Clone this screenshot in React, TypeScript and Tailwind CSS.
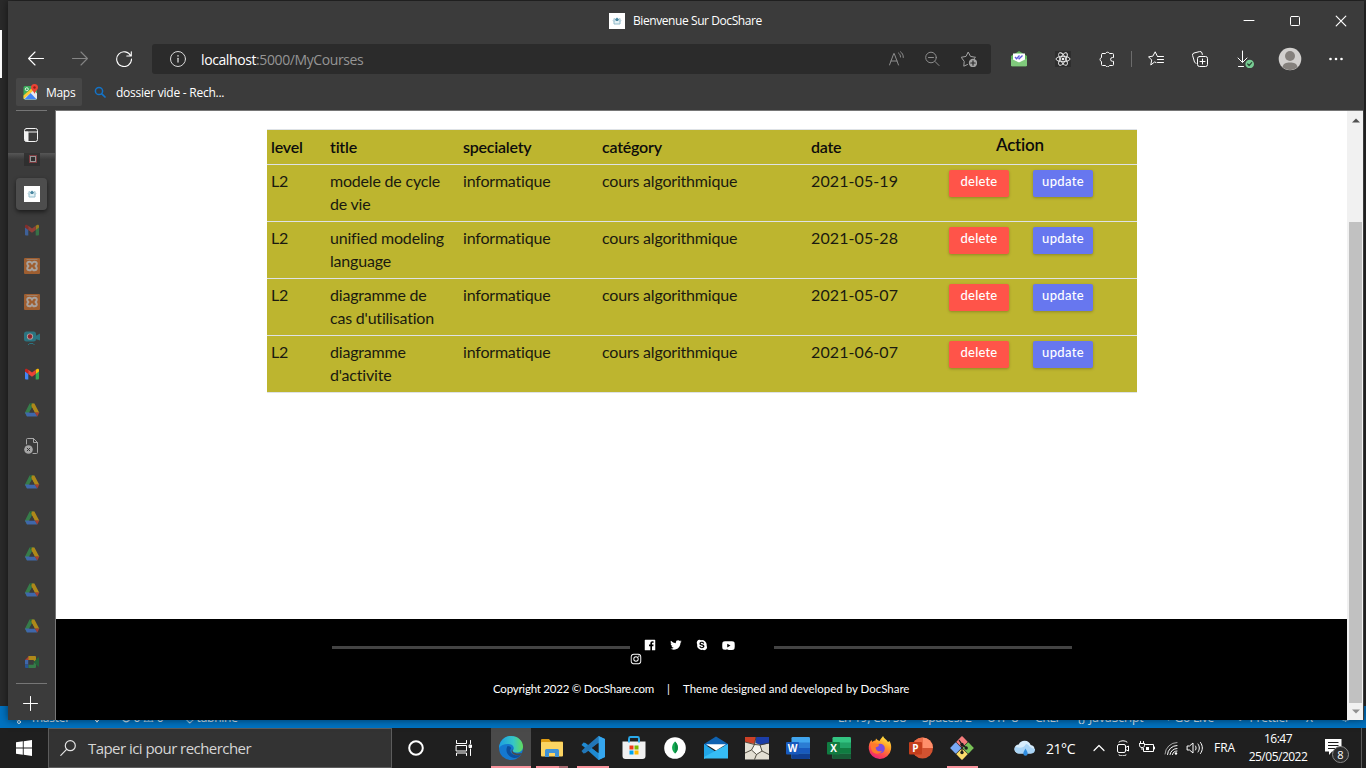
import React from "react";
import type { ReactNode } from "react";
import {
  BiLogoFacebookSquare,
  BiLogoTwitter,
  BiLogoSkype,
  BiLogoYoutube,
  BiLogoInstagram,
} from "react-icons/bi";

type IconProps = { className?: string; size?: number; box?: number; children: ReactNode };

function Line({ className = "", size = 16, box = 16, children }: IconProps) {
  return (
    <svg
      className={`block shrink-0 ${className}`}
      width={size}
      height={size}
      viewBox={`0 0 ${box} ${box}`}
      fill="none"
      stroke="currentColor"
      strokeLinecap="round"
      strokeLinejoin="round"
    >
      {children}
    </svg>
  );
}

function Art({ className = "", size = 24, box = 24, children }: IconProps) {
  return (
    <svg className={`block shrink-0 ${className}`} width={size} height={size} viewBox={`0 0 ${box} ${box}`}>
      {children}
    </svg>
  );
}

/* ---------- tab icons ---------- */

function DocShareIcon() {
  return (
    <Art size={16} box={16}>
      <rect width="16" height="16" fill="#fff" />
      <path d="M5.500 5.500H5v5.500h6V5.500h-.5" fill="#e4f1f5" stroke="#93bccb" strokeWidth="1" />
      <path d="M4 7.500l1 1M12 7.500l-1 1" stroke="#93bccb" strokeWidth="1" />
      <path d="M6 6.500L8 4.500l2 2-1 1.500H7z" fill="#4a87a1" />
    </Art>
  );
}

function Gmail({ dim = false }: { dim?: boolean }) {
  return (
    <Art size={16} box={16} className={dim ? "opacity-50" : ""}>
      <path d="M1 5v7.500a1 1 0 0 0 1 1h2.300V7.500z" fill="#4285f4" />
      <path d="M15 5v7.500a1 1 0 0 1-1 1h-2.300V7.500z" fill="#34a853" />
      <path d="M11.700 3.800L13 2.900c.9-.6 2 0 2 1.100v1.500l-3.300 2.400z" fill="#fbbc04" />
      <path d="M4.300 3.800L3 2.900C2.100 2.300 1 2.900 1 4v1.500l3.300 2.400z" fill="#c5221f" />
      <path d="M4.300 3.800L8 6.600l3.700-2.800v4.100L8 10.700 4.300 7.900z" fill="#ea4335" />
    </Art>
  );
}

function Xampp() {
  return (
    <Art size={16} box={16} className="opacity-60">
      <rect width="16" height="16" rx="1" fill="#e0762a" />
      <path d="M2.500 1.500h11" stroke="#efe6de" strokeWidth=".8" opacity=".6" />
      <path
        d="M8 5.800C7.600 4.300 6.800 3.700 5.500 3.700 4 3.700 3.200 4.600 3.200 5.700c0 .9.500 1.500 1.300 2.300-.8.800-1.300 1.400-1.300 2.300 0 1.100.8 2 2.300 2 1.300 0 2.100-.6 2.500-2.100.4 1.500 1.200 2.100 2.500 2.100 1.500 0 2.300-.9 2.300-2 0-.9-.5-1.500-1.300-2.300.8-.8 1.300-1.400 1.300-2.300 0-1.100-.8-2-2.300-2-1.300 0-2.100.6-2.500 2.100z"
        fill="none"
        stroke="#efe6de"
        strokeWidth="1.900"
        strokeLinejoin="round"
      />
    </Art>
  );
}

function Camera() {
  return (
    <Art size={16} box={16}>
      <rect x="0" y="1.500" width="12" height="10" rx="2.500" fill="#2b7480" />
      <path d="M11.500 6L16 3.500v7l-4.500-1.500z" fill="#2b7480" />
      <path d="M4 15l1.500-1.500h3.500l1.500 1.500" fill="none" stroke="#2b7480" />
      <circle cx="6" cy="6.500" r="3.100" fill="#b9a3a3" />
      <circle cx="6" cy="6.500" r="2.200" fill="#8f2328" />
    </Art>
  );
}

function Drive() {
  return (
    <Art size={16} box={16} className="opacity-60">
      <path d="M5.600 1.500h4.800L5 10.800 3 14.500 .9 10.800z" fill="#34a853" />
      <path d="M5.600 1.500h2.600l1.400 2.600L8 6z" fill="#188038" />
      <path d="M7.800 1.500h2.600l4.900 9.200h-4.500L7.300 4z" fill="#fbbc04" />
      <path d="M.9 10.600h10l2.500 4H3z" fill="#4285f4" />
      <path d="M10.700 10.600h4.600l-1.900 4z" fill="#ea4335" />
      <path d="M8 5.800l2.600 4.800H5.400z" fill="#3b3b3b" />
    </Art>
  );
}

function Meet() {
  return (
    <Art size={16} box={16} className="opacity-60">
      <path d="M1 6l4-4v4z" fill="#ea4335" />
      <path d="M1 6h3.500v4.500H1z" fill="#4285f4" />
      <path d="M1 10.500h3.500v3.500H2a1 1 0 0 1-1-1z" fill="#1967d2" />
      <path d="M4.500 2H11a1 1 0 0 1 1 1v4H9.500V6h-5z" fill="#fbbc04" />
      <path d="M4.500 10.500h5V8l2.500 1v4a1 1 0 0 1-1 1H4.500z" fill="#34a853" />
      <path d="M9.500 8L14 3.500c.5-.4 1-.2 1 .4v8.200c0 .6-.5.800-1 .4z" fill="#188038" />
      <path d="M4.500 6h5v4.500h-5z" fill="#3b3b3b" />
    </Art>
  );
}

function FileX() {
  return (
    <Line className="text-[#a6a6a6]">
      <path d="M2.500 6V1.500a1 1 0 0 1 1-1h6l4 4v10a1 1 0 0 1-1 1H9M9.500.5v4h4" />
      <circle cx="4.500" cy="11.500" r="4.300" fill="#a6a6a6" stroke="none" />
      <path d="M3.200 10.200l2.600 2.600M5.800 10.200l-2.600 2.600" stroke="#333" />
    </Line>
  );
}

/* ---------- browser window ---------- */

function TitleBar() {
  return (
    <div className="flex h-[39px] shrink-0 items-center">
      <div className="ml-[601px]">
        <DocShareIcon />
      </div>
      <span className="ml-2 w-[600px] text-[12px] tracking-[-0.42px] text-white">Bienvenue Sur DocShare</span>
      <Line size={12} box={12} className="ml-[10px] text-white">
        <path d="M1 5.500h10" />
      </Line>
      <Line size={12} box={12} className="ml-[34px] text-white">
        <rect x="1.500" y="1.500" width="9" height="9" rx="1" />
      </Line>
      <Line size={12} box={12} className="ml-[34px] text-white">
        <path d="M1.200 1.200l9.600 9.600M10.800 1.200l-9.600 9.600" strokeWidth="1.200" />
      </Line>
    </div>
  );
}

function AddressBar() {
  return (
    <div className="ml-5 flex h-[30px] w-[839px] items-center rounded-[3px] bg-[#2b2b2b] pr-[14px] pl-[18px]">
      <Line className="text-[#d8d8d8]">
        <circle cx="8" cy="8" r="7.500" />
        <path d="M8 7.300V11" strokeWidth="1.300" />
        <path d="M8 4.800v.1" strokeWidth="1.500" />
      </Line>
      <span className="ml-[15px] flex-1 text-[14px] tracking-[-0.4px] text-[#959595]">
        <span className="text-white">localhost</span>:5000/MyCourses
      </span>
      <Line className="text-[#8e8e8e]">
        <path d="M.5 14L4.800 2.500h.4L9.500 14M2 10h6M9.500 2c1.300 1 2 2.200 2 4M11.500.800c1.800 1.300 2.800 3 2.800 5.700" />
      </Line>
      <Line className="ml-5 text-[#8e8e8e]">
        <circle cx="6" cy="6.500" r="5.300" />
        <path d="M3.500 6.500h5M10 10.500l4 4" />
      </Line>
      <Line className="ml-5 text-[#a3a3a3]">
        <path d="M6.500 13.500L2.800 15.200l.4-4.900L.2 6.300l4.800-.9L7.200 1l2.300 4.400 5 .9-1.500 1.500" />
        <circle cx="12" cy="12" r="4.200" fill="#a3a3a3" stroke="none" />
        <path d="M12 9.800v4.400M9.800 12h4.400" stroke="#2b2b2b" strokeWidth="1.200" />
      </Line>
    </div>
  );
}

function Toolbar() {
  return (
    <div className="flex h-[38px] shrink-0 items-center">
      <Line className="ml-5 text-white">
        <path d="M15.500 7.500H.800M7 1L.6 7.500 7 14" strokeWidth="1.100" />
      </Line>
      <Line className="ml-7 text-[#858585]">
        <path d="M.5 7.500h14.700M9 1l6.400 6.500L9 14" strokeWidth="1.100" />
      </Line>
      <Line className="ml-7 text-white">
        <path d="M14.800 5A7.400 7.400 0 1 0 15.500 8M15.300.800V5h-4.500" strokeWidth="1.100" />
      </Line>
      <AddressBar />
      <Art size={16} box={16} className="ml-5">
        <path d="M0 5l8-5 8 5v9.200a1 1 0 0 1-1 1H1a1 1 0 0 1-1-1z" fill="#5fb55c" />
        <path d="M2 2.500h12v7L8 12 2 9.500z" fill="#fff" />
        <path d="M0 7.500l8 4 8-4v6.700a1 1 0 0 1-1 1H1a1 1 0 0 1-1-1z" fill="#80ca7c" />
        <path d="M4 6l1.600 1.800L8.500 4.500M7.500 7.300l.6.500L11.500 4.500" fill="none" stroke="#5c58d8" strokeWidth="1.300" />
      </Art>
      <Art size={16} box={16} className="ml-7">
        <rect width="16" height="16" fill="#2e2e2e" />
        <g fill="none" stroke="#f2f2f2" strokeWidth=".9">
          <ellipse cx="8" cy="8" rx="7" ry="2.700" />
          <ellipse cx="8" cy="8" rx="7" ry="2.700" transform="rotate(60 8 8)" />
          <ellipse cx="8" cy="8" rx="7" ry="2.700" transform="rotate(120 8 8)" />
        </g>
        <circle cx="8" cy="8" r="1.300" fill="#f2f2f2" />
      </Art>
      <Line className="ml-7 text-white">
        <path d="M3.500 2.500h3a2.200 2.200 0 0 1 4 0h3a1 1 0 0 1 1 1v3h-1a1.900 1.900 0 0 0 0 3.800h1v3.200a1 1 0 0 1-1 1h-3a2.200 2.200 0 0 1-4 0h-3a1 1 0 0 1-1-1v-3a2.100 2.100 0 0 1 0-4v-3a1 1 0 0 1 1-1z" />
      </Line>
      <div className="ml-4 h-4 w-px bg-[#6c6c6c]" />
      <Line className="ml-4 text-white">
        <path d="M8 11.500L6.500 11 2.800 14l.9-5L.5 5.800l4.300-.6L7.200.800l1.900 4M9.500 5.500h6M9.500 8.500h6M9.500 11.500h6" />
      </Line>
      <Line className="ml-7 text-white">
        <rect x="5.500" y="5.500" width="10" height="10" rx="2" />
        <path d="M10.500 8v5M8 10.500h5M4 12.500L2.500 11 .6 4.500A2 2 0 0 1 2 2L7.500.6A2 2 0 0 1 10 2l.3 1.500" />
      </Line>
      <Line size={18} box={18} className="ml-[29px] text-white">
        <path d="M5.500 1v11M1 8l4.500 4.500L10 8M1.500 16.500h5" />
        <circle cx="12.700" cy="14" r="4.300" fill="#77cc93" stroke="none" />
        <path d="M10.700 14l1.400 1.500 2.600-2.900" stroke="#2b4a35" strokeWidth="1.200" />
      </Line>
      <Art size={24} box={24} className="ml-[23px]">
        <circle cx="12" cy="12" r="11.300" fill="#d2d0ce" />
        <circle cx="12" cy="9" r="5" fill="#85817d" />
        <path d="M4.500 20.300C5 16.500 8 15.500 12 15.500s7 1 7.500 4.800A11.300 11.300 0 0 1 4.500 20.300z" fill="#85817d" />
      </Art>
      <Art size={16} box={16} className="ml-[26px]">
        <circle cx="2.500" cy="8" r="1.300" fill="#fff" />
        <circle cx="8" cy="8" r="1.300" fill="#fff" />
        <circle cx="13.500" cy="8" r="1.300" fill="#fff" />
      </Art>
    </div>
  );
}

function Bookmarks() {
  return (
    <div className="flex h-8 shrink-0 items-start pl-2 text-[12px] text-white">
      <div className="flex h-7 w-[66px] items-center rounded-[2px] bg-[#474747] pl-[7px]">
        <Art size={16} box={16}>
          <rect x=".5" y="2" width="13.500" height="13.500" rx="1.500" fill="#3dab5b" />
          <path d="M1 14.500L10 5.500l4 4v4.500a1.500 1.500 0 0 1-1.500 1.500H2z" fill="#e8eaed" />
          <path d="M1.500 15.300L7.500 9l6 6.300z" fill="#4285f4" />
          <path d="M.5 11.500L9 4l1.500 2.500L.5 15z" fill="#fcc934" />
          <circle cx="3.800" cy="5.200" r="1.500" fill="none" stroke="#fff" strokeWidth=".8" />
          <path d="M11.500 0a3.500 3.500 0 0 1 3.500 3.500c0 2.500-2.800 3.500-3.500 6.500C10.800 7 8 6 8 3.500A3.500 3.500 0 0 1 11.500 0z" fill="#ea4335" />
          <circle cx="11.500" cy="3.500" r="1.200" fill="#8f1f16" />
        </Art>
        <span className="ml-[7px] pt-px tracking-[-0.3px]">Maps</span>
      </div>
      <div className="flex h-7 items-center pl-3">
        <Line size={12} box={12} className="text-[#1373c8]">
          <circle cx="5" cy="5" r="3.600" strokeWidth="1.500" />
          <path d="M7.800 7.800L11 11" strokeWidth="1.700" />
        </Line>
        <span className="ml-[10px] pt-px tracking-[-0.25px]">dossier vide - Rech...</span>
      </div>
    </div>
  );
}

const tabs: ReactNode[] = [
  <Gmail dim />,
  <Xampp />,
  <Xampp />,
  <Camera />,
  <Gmail />,
  <Drive />,
  <FileX />,
  <Drive />,
  <Drive />,
  <Drive />,
  <Drive />,
  <Drive />,
  <Meet />,
];

function TabStrip() {
  return (
    <div className="flex w-[47px] shrink-0 flex-col">
      <div className="ml-2 h-px w-[31px] bg-[#767676]" />
      <div className="flex h-[42px] items-center pt-[6px] pl-[15px]">
        <Line size={16} box={16} className="text-[#f2f2f2]">
          <rect x="1.500" y="1.500" width="13" height="13" rx="2" />
          <path d="M1.500 5h13" />
          <path d="M2 5h3v9H3a1 1 0 0 1-1-1z" fill="currentColor" />
        </Line>
      </div>
      <div className="h-[25px] bg-linear-to-b from-[#565656] to-[#3b3b3b] to-[25%] pl-4">
        <div className="flex h-[13px] w-4 justify-center bg-[#2e2e2e]/85 pt-[3px]">
          <div className="ml-px h-[6px] w-[6px] border border-[#999] outline-1 outline-[#7c3a3f]" />
        </div>
      </div>
      <div className="ml-2 flex h-8 w-[31px] items-center justify-center rounded-[4px] bg-[#4d4d4d] pl-px shadow-[0_2px_4px_rgba(0,0,0,0.55)]">
        <DocShareIcon />
      </div>
      <div className="mt-[2px] flex flex-col">
        {tabs.map((icon, i) => (
          <div key={i} className="flex h-9 items-center pl-4">
            {icon}
          </div>
        ))}
      </div>
      <div className="mt-[3px] ml-2 h-px w-[31px] bg-[#767676]" />
      <Line className="mt-[11px] ml-[14px] text-white" size={17} box={17}>
        <path d="M8.500 1.500v14M1.500 8.500h14" />
      </Line>
    </div>
  );
}

/* ---------- page ---------- */

const rows = [
  { level: "L2", title: ["modele de cycle", "de vie"], date: "2021-05-19" },
  { level: "L2", title: ["unified modeling", "language"], date: "2021-05-28" },
  { level: "L2", title: ["diagramme de", "cas d'utilisation"], date: "2021-05-07" },
  { level: "L2", title: ["diagramme", "d'activite"], date: "2021-06-07" },
];

const grid = "grid grid-cols-[59px_133px_139px_209px_138px_192px] pl-1";

function CourseTable() {
  return (
    <div className="mt-[18px] ml-[211px] w-[870px] border-t border-[#dee2e6] bg-[#bdb52f] font-['Lato',sans-serif] text-[16px] leading-[23px] text-[#1a1a10]">
      <div className={`${grid} h-[35px] border-b border-[#dee2e6] pt-[5px] font-semibold tracking-[-0.22px] text-[#0c0c0c]`}>
        <span>level</span>
        <span>title</span>
        <span>specialety</span>
        <span>catégory</span>
        <span>date</span>
        <span className="-mt-[2px] pl-[47px] text-[17px] tracking-[-0.25px]">Action</span>
      </div>
      {rows.map((r) => (
        <div key={r.date} className={`${grid} h-[57px] border-b border-[#dee2e6] pt-[4px] tracking-[-0.2px]`}>
          <span>{r.level}</span>
          <span>
            {r.title[0]}
            <br />
            {r.title[1]}
          </span>
          <span>informatique</span>
          <span>cours algorithmique</span>
          <span className="tracking-[0.1px]">{r.date}</span>
          <span className="flex gap-6 pt-px text-center text-[13px] font-medium text-white">
            <button className="h-[27px] w-[60px] rounded-[2px] bg-[#ff5449] pb-1 tracking-[0.2px] shadow-[0_1px_3px_rgba(0,0,0,0.25)]">
              delete
            </button>
            <button className="h-[27px] w-[60px] rounded-[2px] bg-[#6777ef] pb-1 tracking-[0.35px] shadow-[0_1px_3px_rgba(0,0,0,0.25)]">
              update
            </button>
          </span>
        </div>
      ))}
    </div>
  );
}

function PageFooter() {
  return (
    <div className="mt-auto h-[101px] bg-black font-['Lato',sans-serif] text-white">
      <div className="flex h-[58px] pl-[276px]">
        <div className="mt-[27px] h-[3px] w-[298px] bg-[#434343]" />
        <div className="w-[144px] pt-[19px]">
          <div className="flex h-[14px] items-center pl-[13px]">
            <BiLogoFacebookSquare size={14} />
            <BiLogoTwitter size={14} className="ml-3" />
            <BiLogoSkype size={14} className="ml-3" />
            <BiLogoYoutube size={15} className="ml-3" />
          </div>
          <BiLogoInstagram size={14} className="-ml-px" />
        </div>
        <div className="mt-[27px] h-[3px] w-[298px] bg-[#434343]" />
      </div>
      <div className="flex h-6 items-center pl-[437px] text-[11.500px]">
        <span className="w-[174px] tracking-[-0.23px]">Copyright 2022 © DocShare.com</span>
        <span className="w-4">|</span>
        <span>Theme designed and developed by DocShare</span>
      </div>
    </div>
  );
}

function ScrollBar() {
  return (
    <div className="flex w-4 shrink-0 flex-col items-center bg-[#f1f1f1]">
      <Art size={8} box={8} className="mt-[5px] ml-px">
        <path d="M0 6.500L4 2.500l4 4z" fill="#505050" />
      </Art>
      <div className="mt-[98px] ml-px h-[481px] w-[13px] bg-[#c1c1c1]" />
      <Art size={8} box={8} className="mt-1 ml-px">
        <path d="M0 2.500L4 6.500l4-4z" fill="#8f8f8f" />
      </Art>
    </div>
  );
}

function BrowserWindow() {
  return (
    <div className="absolute top-px left-2 flex h-[719px] w-[1356px] flex-col bg-[#3b3b3b] shadow-[0_0_8px_rgba(0,0,0,0.55)]">
      <TitleBar />
      <Toolbar />
      <Bookmarks />
      <div className="flex h-[610px]">
        <TabStrip />
        <div className="flex w-[1308px] border-t border-l border-[#767676]">
          <div className="flex w-[1291px] flex-col bg-white">
            <CourseTable />
            <PageFooter />
          </div>
          <ScrollBar />
        </div>
      </div>
    </div>
  );
}

/* ---------- editor behind the browser ---------- */

function EditorBackdrop() {
  return (
    <div className="flex h-[728px] flex-col bg-[#2a2a2a]">
      <div className="mt-[30px] h-12 w-[2px] bg-white" />
      <div className="mt-auto flex h-[22px] items-center bg-[#0072c0] pt-[2px] pl-[14px] text-[12px] tracking-[-0.25px] whitespace-nowrap text-white/85">
        <Line size={12} box={12}>
          <circle cx="3" cy="2" r="1.500" />
          <circle cx="5" cy="10" r="1.500" />
          <path d="M3 4v4M9 2v3l-4 3" />
        </Line>
        <span className="ml-[6px] w-[59px]">master</span>
        <Line size={12} box={12}>
          <path d="M1 6a5 5 0 0 1 10 0M6 4v6M4 8l2 2 2-2" />
        </Line>
        <span className="ml-[18px] w-[64px]">⊗ 0 ⚠ 0</span>
        <span>◇ tabnine</span>
        <span className="ml-auto w-[84px]">Ln 19, Col 58</span>
        <span className="w-[65px]">Spaces: 2</span>
        <span className="w-[48px]">UTF-8</span>
        <span className="w-[42px]">CRLF</span>
        <span className="w-[88px] tracking-normal">{"{}"} JavaScript</span>
        <span className="w-[72px]">⌖ Go Live</span>
        <span className="w-[69px]">✓ Prettier</span>
        <span className="w-[34px]">⅄</span>
        <span className="w-[26px]">♤</span>
      </div>
    </div>
  );
}

/* ---------- task bar ---------- */

function EdgeLogo() {
  return (
    <Art>
      <defs>
        <linearGradient id="edgeTop" x1="0" y1="0" x2="1" y2="0">
          <stop offset="0" stopColor="#1b9de2" />
          <stop offset=".6" stopColor="#36c6c6" />
          <stop offset="1" stopColor="#62dc5a" />
        </linearGradient>
      </defs>
      <circle cx="12" cy="12" r="12" fill="#1478cf" />
      <path d="M0 12C.5 4.500 6 0 12 0c7 0 12 5 12 10.500 0 4-3 6-6.500 6-3 0-4-1.300-3.500-2.200 1.800-2 .5-5.300-3-6C6.500 7.500 2 9 0 12z" fill="url(#edgeTop)" />
      <path d="M8.500 10c-3 5 .5 11 6.500 12 3 .2 5.500-1 7-3.500-3 1.300-6.500 1.200-9-.8C10.800 16 11 13.500 12.200 12 11.500 10.500 10 10 8.500 10z" fill="#0c4f9d" />
      <path d="M13.800 12.600c-1.300 2 .2 4.400 3.700 4.800 2.500.3 4.600-.1 6-1l-1.700 2.300c-3 1-6.700.5-8.300-1.200-1.500-1.600-1-3.700.3-4.900z" fill="#4a4a4a" />
    </Art>
  );
}

function FolderLogo() {
  return (
    <Art>
      <path d="M1 4a1 1 0 0 1 1-1h7l2 2.500h11a1 1 0 0 1 1 1V10H1z" fill="#e09c12" />
      <rect x="1" y="6" width="22" height="14.500" rx="1" fill="#fcd462" />
      <path d="M5 21v-6.500a1.500 1.500 0 0 1 1.500-1.500h11a1.500 1.500 0 0 1 1.500 1.500V21h-4v-4H9v4z" fill="#3f93d8" />
    </Art>
  );
}

function CodeLogo() {
  return (
    <Art>
      <path d="M17.500 0L24 3v18l-6.500 3L2.500 10.500.5 9l2-2.500L4.500 7l13 10z" fill="#1f8ad2" />
      <path d="M17.500 0v7L4.500 17l-2 .5L.5 15l2-2z" fill="#2277b8" />
      <path d="M17.500 0L24 3v18l-6.500 3z" fill="#35a6ee" />
      <path d="M17.500 7v10L11 12z" fill="#1f1f1f" />
    </Art>
  );
}

function StoreLogo() {
  return (
    <Art>
      <path d="M7 7V2.500A1.500 1.500 0 0 1 8.500 1h7A1.500 1.500 0 0 1 17 2.500V7" fill="none" stroke="#29a9ea" strokeWidth="1.800" />
      <path d="M.5 5.500h23V20a3 3 0 0 1-3 3h-17a3 3 0 0 1-3-3z" fill="#f1f1f1" />
      <path d="M7 6.500V3M17 6.500V3" stroke="#29a9ea" strokeWidth="1.800" />
      <path d="M7.500 9.500h4v4h-4z" fill="#f03a17" />
      <path d="M12.500 9.500h4v4h-4z" fill="#7fba00" />
      <path d="M7.500 14.500h4v4h-4z" fill="#00a4ef" />
      <path d="M12.500 14.500h4v4h-4z" fill="#ffb900" />
    </Art>
  );
}

function MongoLogo() {
  return (
    <Art>
      <circle cx="12" cy="12" r="10.800" fill="#fff" />
      <path d="M12 5.500c4 4 3.800 8.500 0 12-3.800-3.500-4-8 0-12z" fill="#13aa52" />
      <path d="M12 5.500v12c3.800-3.500 4-8 0-12z" fill="#0b8a41" />
    </Art>
  );
}

function MailLogo() {
  return (
    <Art>
      <path d="M0 8L12 .5 24 8v2H0z" fill="#0f62b0" />
      <path d="M0 8l12 8-12 7z" fill="#21a6e8" />
      <path d="M24 8v14.500H0L0 21z" fill="#36bdf5" />
      <path d="M2 8.200h20L12 14.500z" fill="#fff" />
    </Art>
  );
}

function MosaicLogo() {
  return (
    <Art>
      <rect y="1" width="24" height="22.500" fill="#e3dfd3" />
      <path d="M0 1h11L9.500 8 0 6z" fill="#cc4127" />
      <path d="M11 1h13v6.500L15.500 9l-5-2z" fill="#1c3ea8" />
      <path d="M9.500 8.500l5.500.5 2 6-5.500 3.500-5-4z" fill="#f7f5ee" />
      <path d="M11 1L9.500 8.500 6.500 14l5 4.500L17 15l-2-6-5.500-.5M0 6l9.500 2.500M6.500 14L0 17M11.500 18.500l-2 5M17 15l7 3.500M15 9l9-2" fill="none" stroke="#3f3b30" strokeWidth=".9" />
    </Art>
  );
}

function OfficeLogo({ letter, dark, colors }: { letter: string; dark: string; colors: string[] }) {
  return (
    <div className="grid">
      <Art className="col-start-1 row-start-1">
        <rect x="5.500" y="1" width="18.500" height="22" rx="1.200" fill={colors[0]} />
        <path d="M5.500 6.500H24V12H5.500z" fill={colors[1]} />
        <path d="M5.500 12H24v5.500H5.500z" fill={colors[2]} />
        <path d="M5.500 17.500H24v4.300a1.200 1.200 0 0 1-1.200 1.200H6.700a1.200 1.200 0 0 1-1.200-1.200z" fill={colors[3]} />
        <rect x="0" y="6" width="13" height="12.500" rx="1" fill={dark} />
      </Art>
      <span className="col-start-1 row-start-1 w-[13px] self-center text-center text-[10px] leading-none font-bold text-white">
        {letter}
      </span>
    </div>
  );
}

function PowerPointLogo() {
  return (
    <div className="grid">
      <Art className="col-start-1 row-start-1">
        <circle cx="13.500" cy="12" r="10.500" fill="#d35230" />
        <path d="M13.500 1.500A10.500 10.500 0 0 1 24 12H13.500z" fill="#ff8f6b" />
        <path d="M3 12A10.500 10.500 0 0 1 13.500 1.500V12z" fill="#ed6c47" />
        <rect x="0" y="6" width="13" height="12.500" rx="1" fill="#c43e1c" />
      </Art>
      <span className="col-start-1 row-start-1 w-[13px] self-center text-center text-[10px] leading-none font-bold text-white">
        P
      </span>
    </div>
  );
}

function FirefoxLogo() {
  return (
    <Art>
      <defs>
        <linearGradient id="fox" x1=".8" y1="0" x2=".3" y2="1">
          <stop offset="0" stopColor="#fff04a" />
          <stop offset=".4" stopColor="#ff9a25" />
          <stop offset=".75" stopColor="#ff4550" />
          <stop offset="1" stopColor="#e8207c" />
        </linearGradient>
      </defs>
      <path d="M15 0c1 2.500 3.500 3.500 5 6l1.500-1c1.500 3 2 5 1.500 8.500A11.200 11.200 0 0 1 .8 13C.5 9 1.500 6 3.500 4l.8 2C5.500 5 6.500 4.500 7.500 4.500L8 2.500c1 1 2 2 3.500 2.500C12.500 3 14 1.500 15 0z" fill="url(#fox)" />
      <circle cx="12" cy="12.500" r="4.800" fill="#7a4be0" />
      <path d="M3 8c3-1.500 5 0 8 .5.500 1.500-2 2.500-3.500 3C8 15 11 16 14 15c-2 3.500-8 3.500-10 0-1-2-1.500-4.500-1-7z" fill="#ff7a2c" />
    </Art>
  );
}

function GitLogo() {
  return (
    <Art>
      <g transform="rotate(45 12 12)">
        <rect x="3.500" y="3.500" width="8.200" height="8.200" rx=".5" fill="#f47c7c" />
        <rect x="12.300" y="3.500" width="8.200" height="8.200" rx=".5" fill="#79c257" />
        <rect x="3.500" y="12.300" width="8.200" height="8.200" rx=".5" fill="#79aaf5" />
        <rect x="12.300" y="12.300" width="8.200" height="8.200" rx=".5" fill="#fbdc6c" />
      </g>
      <path d="M9 4l3 4.500v9M12 8.500l4.500 3.500" stroke="#1d1d1d" strokeWidth="1.200" fill="none" />
      <circle cx="12" cy="8.500" r="1.700" fill="#1d1d1d" />
      <circle cx="12" cy="16.500" r="1.700" fill="#1d1d1d" />
      <circle cx="16.200" cy="12" r="1.700" fill="#1d1d1d" />
    </Art>
  );
}

const apps: { icon: ReactNode; tile?: string; bar?: string }[] = [
  { icon: <EdgeLogo />, tile: "bg-[#4a4a4a]", bar: "w-10 bg-[#f8939c]" },
  { icon: <FolderLogo />, bar: "w-8 bg-[linear-gradient(to_right,#f8939c_0_23px,#a86a70_23px)]" },
  { icon: <CodeLogo />, bar: "w-8 bg-[#f8939c]" },
  { icon: <StoreLogo /> },
  { icon: <MongoLogo /> },
  { icon: <MailLogo /> },
  { icon: <MosaicLogo /> },
  { icon: <OfficeLogo letter="W" dark="#185abd" colors={["#41a5ee", "#2b7cd3", "#185abd", "#103f91"]} /> },
  { icon: <OfficeLogo letter="X" dark="#107c41" colors={["#33c481", "#21a366", "#107c41", "#185c37"]} /> },
  { icon: <FirefoxLogo /> },
  { icon: <PowerPointLogo /> },
  { icon: <GitLogo />, bar: "w-[31px] bg-[#f8939c]" },
];

function Taskbar() {
  return (
    <div className="flex h-10 items-center bg-[#1f1f1f] text-white">
      <Art size={16} box={16} className="ml-4">
        <path d="M0 2.300L6.800 1.300v6.300H0zM7.700 1.200L16 0v7.600H7.700zM0 8.500h6.800v6.300L0 13.800zM7.700 8.500H16V16l-8.300-1.200z" fill="#fff" />
      </Art>
      <div className="ml-4 flex h-10 w-[344px] items-center border border-[#5c5c5c] bg-[#333] pl-[11px]">
        <Line className="text-[#e4e4e4]">
          <circle cx="10.300" cy="5.700" r="5" strokeWidth="1.200" />
          <path d="M6.600 9.400L.8 15.300" strokeWidth="1.200" />
        </Line>
        <span className="ml-3 text-[15px] tracking-[-0.55px] text-[#d6d6d6]">Taper ici pour rechercher</span>
      </div>
      <Line size={18} box={18} className="ml-[15px]">
        <circle cx="9" cy="9" r="6.800" strokeWidth="2" />
      </Line>
      <Line size={18} box={18} className="ml-[30px]">
        <path d="M1.500 1.500v3h10v-3M1.500 6.500h10v5.500h-10zM1.500 16.500v-2.500h10v2.500M15.500 1.500v3M15.500 10v6.500" />
        <path d="M14.500 6h2v2.500h-2z" fill="currentColor" />
      </Line>
      <div className="ml-[18px] flex gap-px">
        {apps.map((a, i) => (
          <div key={i} className={`flex h-10 w-10 flex-col items-center ${a.tile ?? ""}`}>
            <div className="flex h-[38px] items-center pt-[2px]">{a.icon}</div>
            {a.bar && <div className={`h-[2px] ${a.bar}`} />}
          </div>
        ))}
      </div>
      <Art size={22} box={22} className="ml-[32px]">
        <path d="M5 16.500a4.500 4.500 0 0 1-.3-9 6.500 6.500 0 0 1 12 .5 4.300 4.300 0 0 1 .3 8.500z" fill="#d6ecfb" />
        <path d="M5 16.500a4.500 4.500 0 0 1-3.500-7C5 12 10 11 12 7c3 0 3 4 9 5a4.300 4.300 0 0 1-4 4.500z" fill="#a9d4f5" />
        <path d="M11.500 11.500c1.500 2.500 2.200 3.500 2.200 5a2.200 2.200 0 0 1-4.400 0c0-1.500.7-2.500 2.200-5z" fill="#2f8de0" />
      </Art>
      <span className="ml-[10px] w-[46px] text-[14px] tracking-[-0.45px]">21°C</span>
      <Line size={14} box={14}>
        <path d="M2 9.500l5-5 5 5" strokeWidth="1.200" />
      </Line>
      <Line className="ml-[10px]">
        <rect x="1.500" y="4.500" width="8" height="8" rx="1.500" />
        <path d="M9.500 7.500l3-1.500v5l-3-1.500M3 2C5 .3 9 .3 11 2M3 15c2 1.300 5 1.300 7 0" />
      </Line>
      <Line className="ml-[7px]">
        <path d="M6.500 4.500h8v7H4.500v-3M15.500 7v2M1.500 1.500v2M4.500 1.500v2M.5 3.500h5v2a2 2 0 0 1-2.500 2 2 2 0 0 1-2.500-2zM3 7.500v2" />
        <path d="M7 7h3v3H7z" fill="currentColor" stroke="none" />
      </Line>
      <Line className="ml-[9px]">
        <path d="M1 14A12 12 0 0 1 13 2.500" opacity=".6" />
        <path d="M3.500 14.500A9.500 9.500 0 0 1 13 5.500M6 14.500a7 7 0 0 1 7-6M8.500 14.500a4.500 4.500 0 0 1 4.500-3.500" />
        <circle cx="12" cy="13.500" r="1.200" fill="currentColor" stroke="none" />
      </Line>
      <Line size={18} box={18} className="ml-[6px]">
        <path d="M1.500 7h2l3.500-3v10l-3.500-3h-2zM9.500 7c.8 1.200.8 2.800 0 4M12 5c1.800 2.500 1.800 5.500 0 8M14.500 3.500c2.500 3.500 2.500 7.500 0 11" />
      </Line>
      <span className="ml-[10px] w-[34px] text-[12px]">FRA</span>
      <div className="flex w-[60px] flex-col items-center text-[12px] leading-[18px] tracking-[-0.5px]">
        <span>16:47</span>
        <span>25/05/2022</span>
      </div>
      <div className="relative mt-1 ml-[17px] h-6 w-6">
        <Art size={18} box={18}>
          <path d="M0 1h16.500v12.500H7L4 17v-3.500H0z" fill="#fff" />
          <path d="M3 4.500h10.500M3 7.500h10.500M3 10.500h7" stroke="#1f1f1f" strokeWidth="1.100" />
        </Art>
        <span className="absolute top-[8px] left-[7px] flex h-[17px] w-[17px] items-center justify-center rounded-full border border-[#8a8a8a] bg-[#2d2d2d] text-[11px] leading-none">
          8
        </span>
      </div>
      <div className="ml-auto h-10 w-px bg-[#5a5a5a]" />
      <div className="w-1" />
    </div>
  );
}

export default function App() {
  return (
    <div className="relative h-[768px] w-[1366px] overflow-hidden bg-[#1f1f1f] font-['Open_Sans','Noto_Sans',sans-serif]">
      <EditorBackdrop />
      <BrowserWindow />
      <Taskbar />
    </div>
  );
}
